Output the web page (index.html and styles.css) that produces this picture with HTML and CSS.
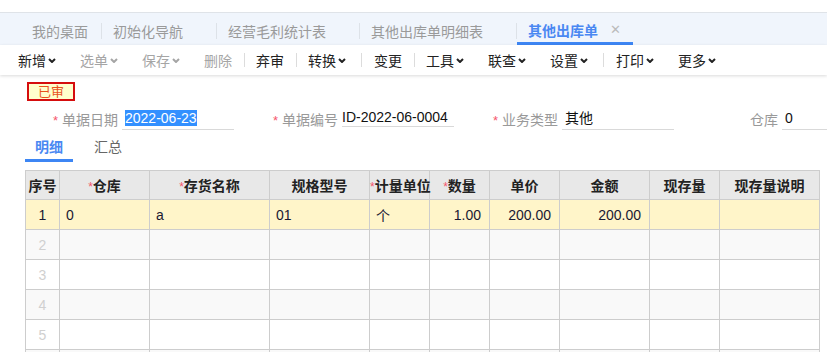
FILE: index.html
```html
<!DOCTYPE html>
<html lang="zh-CN">
<head>
  <meta charset="UTF-8">
  <meta name="viewport" content="width=device-width, initial-scale=1.0">
  <title>其他出库单</title>
  <link rel="stylesheet" href="styles.css">
</head>
<body>

  <div class="tabbar">
    <div class="tab first">我的桌面</div>
    <span class="tab-sep"></span>
    <div class="tab">初始化导航</div>
    <span class="tab-sep"></span>
    <div class="tab">经营毛利统计表</div>
    <span class="tab-sep"></span>
    <div class="tab">其他出库单明细表</div>
    <span class="tab-sep"></span>
    <div class="tab active">其他出库单<span class="tab-close">✕</span></div>
  </div>

  <div class="toolbar">
    <div class="tool">新增<svg class="chev" viewBox="0 0 8 5"><path d="M1 1l3 3 3-3"/></svg></div>
    <div class="tool off">选单<svg class="chev" viewBox="0 0 8 5"><path d="M1 1l3 3 3-3"/></svg></div>
    <div class="tool off">保存<svg class="chev" viewBox="0 0 8 5"><path d="M1 1l3 3 3-3"/></svg></div>
    <div class="tool off">删除</div>
    <span class="tool-sep"></span>
    <div class="tool">弃审</div>
    <span class="tool-sep"></span>
    <div class="tool">转换<svg class="chev" viewBox="0 0 8 5"><path d="M1 1l3 3 3-3"/></svg></div>
    <span class="tool-sep after-menu"></span>
    <div class="tool">变更</div>
    <span class="tool-sep"></span>
    <div class="tool">工具<svg class="chev" viewBox="0 0 8 5"><path d="M1 1l3 3 3-3"/></svg></div>
    <div class="tool">联查<svg class="chev" viewBox="0 0 8 5"><path d="M1 1l3 3 3-3"/></svg></div>
    <div class="tool">设置<svg class="chev" viewBox="0 0 8 5"><path d="M1 1l3 3 3-3"/></svg></div>
    <span class="tool-sep after-menu"></span>
    <div class="tool">打印<svg class="chev" viewBox="0 0 8 5"><path d="M1 1l3 3 3-3"/></svg></div>
    <div class="tool">更多<svg class="chev" viewBox="0 0 8 5"><path d="M1 1l3 3 3-3"/></svg></div>
  </div>

  <div class="content">
    <div class="status">已审</div>

    <div class="form-row">
      <div class="field">
        <label><em>*</em> 单据日期</label>
        <div class="input"><span class="selected">2022-06-23</span></div>
      </div>
      <div class="field">
        <label><em>*</em> 单据编号</label>
        <div class="input short">ID-2022-06-0004</div>
      </div>
      <div class="field">
        <label><em>*</em> 业务类型</label>
        <div class="input">其他</div>
      </div>
      <div class="field">
        <label>仓库</label>
        <div class="input">0</div>
      </div>
    </div>

    <div class="subtabs">
      <div class="subtab active">明细</div>
      <div class="subtab">汇总</div>
    </div>

    <table class="grid">
      <colgroup>
        <col style="width: 34px">
        <col style="width: 90px">
        <col style="width: 120px">
        <col style="width: 100px">
        <col style="width: 60px">
        <col style="width: 60px">
        <col style="width: 70px">
        <col style="width: 90px">
        <col style="width: 70px">
        <col style="width: 100px">
      </colgroup>
      <thead>
        <tr>
          <th>序号</th>
          <th><em>*</em>仓库</th>
          <th><em>*</em>存货名称</th>
          <th>规格型号</th>
          <th class="tight"><em>*</em>计量单位</th>
          <th><em>*</em>数量</th>
          <th>单价</th>
          <th>金额</th>
          <th>现存量</th>
          <th>现存量说明</th>
        </tr>
      </thead>
      <tbody>
        <tr class="current">
          <td class="no">1</td>
          <td>0</td>
          <td>a</td>
          <td>01</td>
          <td>个</td>
          <td class="num">1.00</td>
          <td class="num">200.00</td>
          <td class="num">200.00</td>
          <td></td>
          <td></td>
        </tr>
        <tr><td class="no">2</td><td></td><td></td><td></td><td></td><td></td><td></td><td></td><td></td><td></td></tr>
        <tr><td class="no">3</td><td></td><td></td><td></td><td></td><td></td><td></td><td></td><td></td><td></td></tr>
        <tr><td class="no">4</td><td></td><td></td><td></td><td></td><td></td><td></td><td></td><td></td><td></td></tr>
        <tr><td class="no">5</td><td></td><td></td><td></td><td></td><td></td><td></td><td></td><td></td><td></td></tr>
        <tr><td class="no">6</td><td></td><td></td><td></td><td></td><td></td><td></td><td></td><td></td><td></td></tr>
      </tbody>
    </table>
  </div>

</body>
</html>
```

FILE: styles.css
```css
body {
  margin: 0;
  padding-top: 12px;
  font-family: "Liberation Sans", "Noto Sans CJK SC", sans-serif;
  font-size: 14px;
  color: #333;
  background: #fff;
  overflow: hidden;
}

em {
  font-style: normal;
  color: #f5566c;
}

/* tab bar */
.tabbar {
  display: flex;
  align-items: center;
  height: 32px;
  border-top: 1px solid #dfe3e8;
  background: #f0f5fc;
}

.tab {
  display: flex;
  align-items: center;
  height: 32px;
  box-sizing: border-box;
  padding: 4px 33px 0 11px;
  color: #9a9a9a;
  white-space: nowrap;
}

.tab.first {
  margin-left: 21px;
  padding-right: 13px;
}

.tab.active {
  padding-right: 12px;
  color: #4a88f2;
  font-weight: bold;
  border-bottom: 3px solid #3d86f4;
  padding-top: 4px;
}

.tab-close {
  margin-left: 12px;
  font-weight: normal;
  font-size: 13px;
  color: #bbb;
}

.tab-sep {
  width: 1px;
  height: 16px;
  margin-top: 4px;
  background: #dde2e8;
}

/* toolbar */
.toolbar {
  display: flex;
  align-items: center;
  height: 30px;
  padding-left: 6px;
  background: #fff;
  box-shadow: 0 1px 3px rgba(0, 0, 0, 0.15);
  position: relative;
}

.tool {
  display: flex;
  align-items: center;
  padding: 0 12px;
  color: #222;
  white-space: nowrap;
}

.tool.off {
  color: #a5a5a5;
}

.chev {
  width: 8px;
  height: 5px;
  margin-left: 2px;
  fill: none;
  stroke: currentColor;
  stroke-width: 2;
}

.tool-sep {
  width: 1px;
  height: 14px;
  margin-right: -1px;
  background: #dcdcdc;
}

.tool-sep.after-menu {
  margin-left: 3px;
  margin-right: 0;
}

/* content */
.content {
  padding: 7px 0 0 25px;
}

.status {
  display: inline-block;
  width: 44px;
  height: 15px;
  line-height: 15px;
  margin-left: 2px;
  border: 2px solid #d50d0d;
  background: #ffffcc;
  color: #e8531d;
  font-size: 13px;
  text-align: center;
}

.form-row {
  display: flex;
  height: 36px;
  align-items: center;
  margin-left: -11px;
  white-space: nowrap;
}

.field {
  display: flex;
  align-items: center;
  flex: none;
}

.field label {
  width: 104px;
  margin-right: 4px;
  text-align: right;
  color: #999;
}

.field label em {
  font-size: 13px;
}

.input {
  width: 109px;
  height: 21px;
  line-height: 21px;
  padding-left: 3px;
  border-bottom: 1px solid #d9d9d9;
  color: #111;
}

.input.short {
  width: 112px;
  padding-left: 0;
  height: 18px;
  line-height: 18px;
  margin-top: -3px;
}

.selected {
  background: #3390ff;
  color: #fff;
}

.subtabs {
  display: flex;
  gap: 11px;
  height: 25px;
}

.subtab {
  height: 22px;
  line-height: 21px;
  padding: 0 10px;
  color: #666;
}

.subtab.active {
  color: #4a88f2;
  font-weight: bold;
  border-bottom: 3px solid #3d86f4;
}

/* grid */
.grid {
  margin-top: 8px;
  border-collapse: collapse;
  table-layout: fixed;
  width: 794px;
  font-size: 14px;
}

.grid th,
.grid td {
  border: 1px solid #cdcdcd;
  padding: 0 6px;
  white-space: nowrap;
  overflow: hidden;
}

.grid th {
  height: 28px;
  background: #e8e8e8;
  color: #222;
  font-weight: bold;
  text-align: center;
  padding: 0 2px;
}

.grid th.tight {
  padding: 0;
  overflow: visible;
  text-align: left;
}

.grid th em {
  font-weight: normal;
  font-size: 12px;
}

.grid td {
  height: 29px;
  color: #1a1a33;
}

.grid tbody tr:nth-child(even) td {
  background: #f9f9f9;
}

.grid tbody tr.current td {
  background: #fff5c9;
}

.grid td.no {
  text-align: center;
  color: #d0d0d0;
  padding: 0;
}

.grid tr.current td.no {
  color: #1a1a33;
}

.grid td.num {
  text-align: right;
  padding-right: 8px;
}
```
